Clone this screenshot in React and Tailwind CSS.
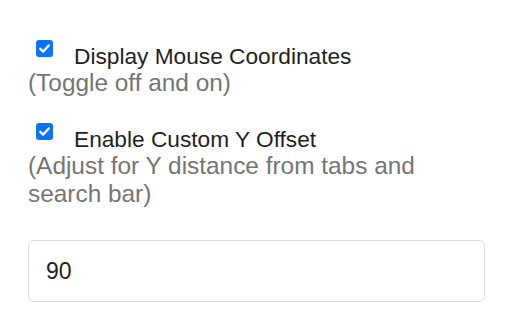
import { useState } from 'react';

const CheckBox = ({ checked }) => (
    <span
        className={`ml-[8px] w-[17px] h-[17px] shrink-0 rounded-[3px] flex items-center justify-center ${
            checked ? 'bg-[#0b74f0]' : 'border-[1.5px] border-[#767676] bg-white'
        }`}
    >
        {checked && (
            <svg width="13" height="13" viewBox="0 0 13 13" fill="none">
                <path d="M2.3 6.8 L5.2 9.6 L10.8 3.4" stroke="white" strokeWidth="2.3" strokeLinecap="round" strokeLinejoin="round" />
            </svg>
        )}
    </span>
);

const Option = ({ checked, onChange, label, hint }) => (
    <div>
        <label className="flex items-start cursor-pointer">
            <input type="checkbox" checked={checked} onChange={onChange} className="sr-only" />
            <CheckBox checked={checked} />
            <span className="ml-[21px] mt-[3px] text-[22.7px] leading-[26px] text-[#1f1f1f]">{label}</span>
        </label>
        <div className="text-[24.4px] leading-[28px] text-[#757575]">{hint}</div>
    </div>
);

const App = () => {
    const [showCoords, setShowCoords] = useState(true);
    const [customOffset, setCustomOffset] = useState(true);
    const [offset, setOffset] = useState('90');

    return (
        <div className="w-[512px] h-[320px] bg-white pt-[40px] pl-[28px] pr-[27px] font-['Liberation_Sans',Arial,sans-serif]">
            <Option
                checked={showCoords}
                onChange={() => setShowCoords(!showCoords)}
                label="Display Mouse Coordinates"
                hint="(Toggle off and on)"
            />
            <div className="mt-[26px]">
                <Option
                    checked={customOffset}
                    onChange={() => setCustomOffset(!customOffset)}
                    label="Enable Custom Y Offset"
                    hint="(Adjust for Y distance from tabs and search bar)"
                />
            </div>
            <input
                type="text"
                value={offset}
                onChange={e => setOffset(e.target.value)}
                className="mt-[32px] block w-full h-[62px] rounded-[6px] border-[1.5px] border-[#dedede] px-[17px] text-[23px] text-[#1f1f1f] outline-none"
            />
        </div>
    );
};

export default App;
